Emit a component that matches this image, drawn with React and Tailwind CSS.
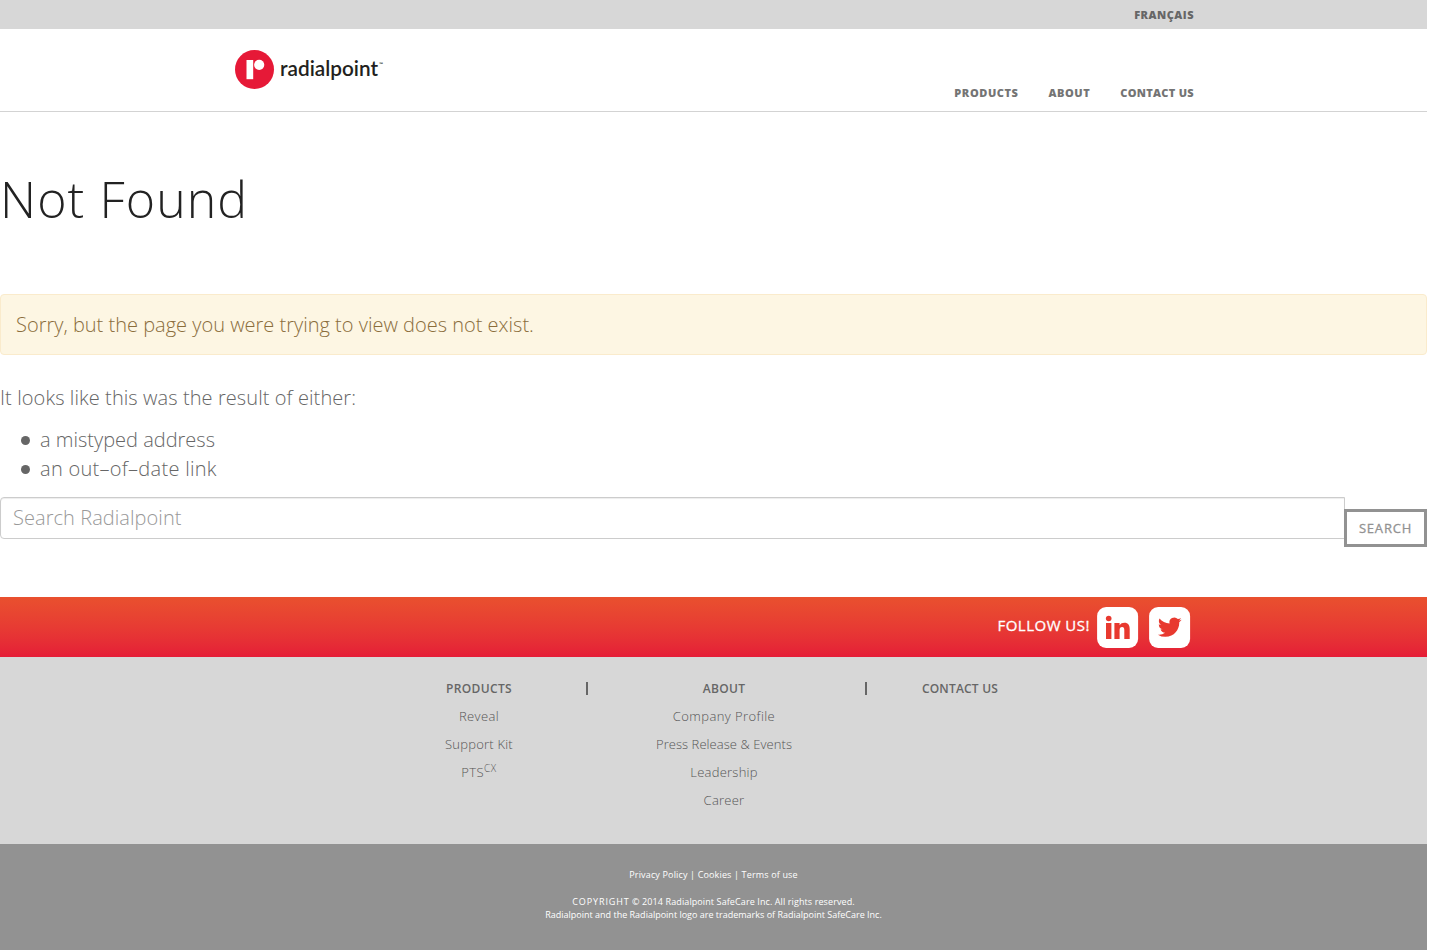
const NAV = [
  { label: 'PRODUCTS', cls: 'tracking-[0.58px]' },
  { label: 'ABOUT', cls: 'tracking-[0.55px]' },
  { label: 'CONTACT US', cls: 'tracking-[0.3px]' },
];

const PRODUCTS = [
  { label: 'Reveal', cls: 'tracking-[0.35px]' },
  { label: 'Support Kit', cls: 'tracking-[0.22px]' },
];

const ABOUT = [
  { label: 'Company Profile', cls: 'tracking-[0.42px]' },
  { label: 'Press Release & Events', cls: 'tracking-[0.06px]' },
  { label: 'Leadership', cls: 'tracking-[0.25px]' },
  { label: 'Career', cls: 'tracking-[0.25px]' },
];

function Logo() {
  return (
    <svg width="150" height="42" viewBox="0 0 150 42" role="img" aria-label="radialpoint">
      <circle cx="19.5" cy="20.5" r="19.5" fill="#e61937" />
      <path d="M11.500 11h6.700v19.200h-6.700z" fill="#fff" />
      <circle cx="24.2" cy="15.8" r="5.1" fill="#fff" />
      <text x="45" y="26.500" fontFamily="Lato, sans-serif" fontWeight="600" fontSize="21" fill="#231f20" textLength="98" lengthAdjust="spacingAndGlyphs">radialpoint</text>
      <text x="144.300" y="16.500" fontFamily="Lato, sans-serif" fontWeight="700" fontSize="5" fill="#231f20">™</text>
    </svg>
  );
}

function LinkedIn() {
  return (
    <svg width="42" height="42" viewBox="0 0 42 42">
      <rect x="0.1" y="0" width="41" height="41" rx="9" fill="#fff" />
      <g fill="#e8392f">
        <circle cx="11.700" cy="11.500" r="2.800" />
        <path d="M9 16h5.400v16.100H9zM17.400 16h5.200v2.200c1-1.700 2.700-2.500 4.800-2.500 3.900 0 5.300 2.600 5.300 6.400v10h-5.400v-9c0-2.100-.6-3.200-2.200-3.200-1.700 0-2.500 1.200-2.500 3.200v9h-5.200z" />
      </g>
    </svg>
  );
}

function Twitter() {
  return (
    <svg width="42" height="42" viewBox="0 0 42 42">
      <rect x="0.1" y="0" width="41" height="41" rx="9" fill="#fff" />
      <path transform="translate(8.900 8.300) scale(0.99)" d="M23.953 4.570a10 10 0 01-2.825.775 4.958 4.958 0 002.163-2.723c-.951.555-2.005.959-3.127 1.184a4.920 4.920 0 00-8.384 4.482C7.690 8.095 4.067 6.130 1.640 3.162a4.822 4.822 0 00-.666 2.475c0 1.710.87 3.213 2.188 4.096a4.904 4.904 0 01-2.228-.616v.06a4.923 4.923 0 003.946 4.827 4.996 4.996 0 01-2.212.085 4.936 4.936 0 004.604 3.417 9.867 9.867 0 01-6.102 2.105c-.39 0-.779-.023-1.170-.067a13.995 13.995 0 007.557 2.209c9.053 0 13.998-7.496 13.998-13.985 0-.21 0-.42-.015-.63A9.935 9.935 0 0024 4.590z" fill="#e8392f" />
    </svg>
  );
}

export default function App() {
  return (
    <div className="h-[950px] w-[1427px] overflow-hidden bg-white font-['Open_Sans',sans-serif] text-[#666]">
      <div className="flex h-[29px] justify-end bg-[#d7d7d7] pr-[233px] text-[11px] leading-[30px] font-extrabold tracking-[0.5px]">
        <a>FRANÇAIS</a>
      </div>
      <header className="flex h-[83px] justify-between border-b border-[#d3d3d3] pr-[233px] pl-[235px]">
        <div className="pt-[20px]"><Logo /></div>
        <nav className="flex gap-[30px] pt-[54px] text-[11px] leading-[20px] font-extrabold text-[#747474]">
          {NAV.map((n) => <a key={n.label} className={n.cls}>{n.label}</a>)}
        </nav>
      </header>

      <main className="h-[485px]">
        <h1 className="pt-[52px] text-[50px] leading-[70px] font-light tracking-[1.1px] text-[#222]">Not Found</h1>
        <div className="mt-[60px] h-[61px] rounded-[4px] border border-[#faebcc] bg-[#fdf6e3] pl-[15px] text-[20px] leading-[60px] font-light text-[#8a6d3b]">
          <span>Sorry, but the page you were trying to view does not exist.</span>
        </div>
        <p className="mt-[29px] text-[20px] leading-[28px] font-light tracking-[0.08px]">It looks like this was the result of either:</p>
        <ul className="mt-[13px] text-[20px] leading-[29px] font-light">
          <li className="flex items-center pl-[21px]"><i className="mt-[2px] mr-[10px] size-[9px] rounded-full bg-[#666]" /><span>a mistyped address</span></li>
          <li className="flex items-center pl-[21px]"><i className="mt-[2px] mr-[10px] size-[9px] rounded-full bg-[#666]" /><span className="tracking-[0.28px]">an out–of–date link</span></li>
        </ul>
        <form className="mt-[14px] flex">
          <div className="h-[42px] w-[1345px] rounded-l-[4px] border border-[#ccc] pl-[12px] text-[20px] leading-[40px] font-light tracking-[0.06px] text-[#999] shadow-[inset_0_1px_1px_rgba(0,0,0,0.075)]">
            <span>Search Radialpoint</span>
          </div>
          <button type="button" className="mt-[12px] -ml-px h-[38px] w-[83px] border-[3px] border-[#929292] text-center text-[13px] leading-[32px] font-medium tracking-[0.8px] text-[#929292] [-webkit-text-stroke:0.3px]">SEARCH</button>
        </form>
      </main>

      <div className="flex h-[60px] justify-end bg-linear-to-b from-[#e9502e] to-[#e51c37] pt-[10px] pr-[236px]">
        <span className="mr-[7px] text-[15px] leading-[37px] font-medium tracking-[0.5px] text-white [-webkit-text-stroke:0.3px]">FOLLOW US!</span>
        <LinkedIn />
        <span className="w-[10px]" />
        <Twitter />
      </div>

      <section className="flex h-[187px] bg-[#d7d7d7] pt-[18px] pl-[371px] text-center text-[13px] leading-[28px] font-light">
        <div className="w-[216px]">
          <h4 className="text-[12px] font-semibold tracking-[0.35px]">PRODUCTS</h4>
          <div className="-mt-px text-[#555]">
            {PRODUCTS.map((l) => <p key={l.label} className={l.cls}>{l.label}</p>)}
            <p className="tracking-[0.4px]">PTS<sup className="text-[10px] leading-none tracking-[0.5px]">CX</sup></p>
          </div>
        </div>
        <i className="mt-[7px] -ml-px h-[13px] w-[2px] bg-[#666]" />
        <div className="w-[272px]">
          <h4 className="text-[12px] font-semibold tracking-[0.3px]">ABOUT</h4>
          <div className="-mt-px text-[#555]">
            {ABOUT.map((l) => <p key={l.label} className={l.cls}>{l.label}</p>)}
          </div>
        </div>
        <i className="mt-[7px] ml-[5px] h-[13px] w-[2px] bg-[#666]" />
        <div className="w-[186px]">
          <h4 className="text-[12px] font-semibold tracking-[0.2px]">CONTACT US</h4>
        </div>
      </section>

      <footer className="h-[106px] bg-[#929292] pt-[24px] text-center text-[9px] leading-[13px] text-white">
        <p className="tracking-[0.15px]">Privacy Policy | Cookies | Terms of use</p>
        <p className="mt-[14px]"><span className="tracking-[0.9px]">COPYRIGHT</span><span className="tracking-[0.1px]"> © 2014 Radialpoint SafeCare Inc. All rights reserved.</span></p>
        <p>Radialpoint and the Radialpoint logo are trademarks of Radialpoint SafeCare Inc.</p>
      </footer>
    </div>
  );
}
